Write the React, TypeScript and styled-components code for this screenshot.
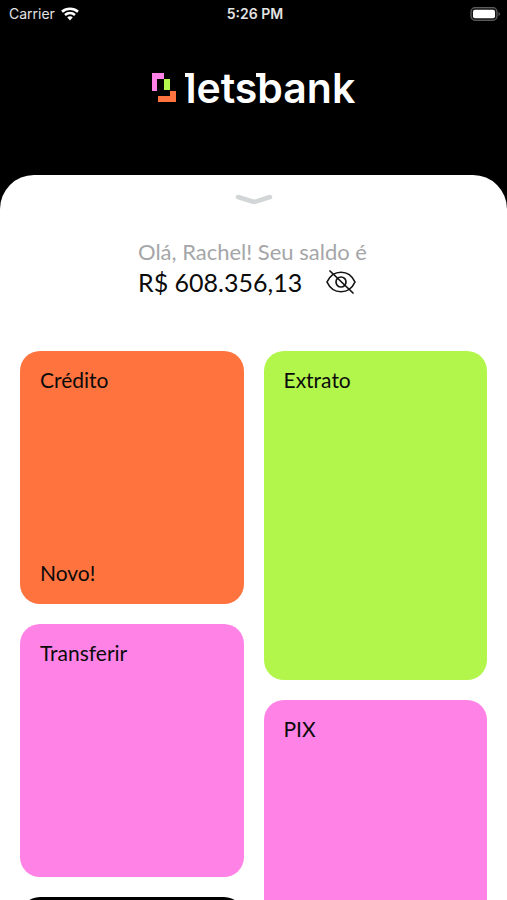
import React from "react";
import styled, { createGlobalStyle } from "styled-components";

const GlobalStyle = createGlobalStyle`
  * { box-sizing: border-box; }
  html, body { margin: 0; background: #000; }
  body { font-family: Lato, "Open Sans", sans-serif; color: #0b0b0b; }
  button { font: inherit; color: inherit; border: 0; padding: 0; background: none; cursor: pointer; }
`;

const Screen = styled.div`
  display: flex;
  flex-direction: column;
  height: 100vh;
  overflow: hidden;
  background: #000;
`;

const StatusBar = styled.header`
  flex: none;
  display: grid;
  grid-template-columns: 1fr auto 1fr;
  align-items: center;
  height: 28px;
  padding: 0 6px 0 9px;
  color: #e4e4e4;
  font: 400 14px/20px Inter, sans-serif;
`;

const Carrier = styled.span`
  display: flex;
  align-items: center;
  gap: 6px;
`;

const Clock = styled.time`
  font-size: 14px;
  font-weight: 600;
`;

const BatteryIcon = styled.svg`
  justify-self: end;
`;

const Brand = styled.div`
  flex: none;
  display: flex;
  align-items: center;
  justify-content: center;
  gap: 10px;
  height: 147px;
  padding-bottom: 28px;
`;

const Wordmark = styled.h1`
  margin: 0;
  color: #fff;
  font-family: Inter, sans-serif;
  font-size: 41px;
  line-height: 48px;
  font-weight: 600;
`;

const SlabLetter = styled.span`
  position: relative;

  &::before {
    content: "";
    position: absolute;
    top: 10px;
    left: -1px;
    width: 6px;
    height: 4px;
    background: #fff;
  }
`;

const Sheet = styled.main`
  flex: none;
  display: flex;
  flex-direction: column;
  align-items: center;
  padding: 18px 20px 20px;
  border-radius: 34px 34px 0 0;
  background: #fff;
`;

const Handle = styled.button`
  display: flex;
  height: 12px;
`;

const Balance = styled.section`
  width: 231px;
  margin-top: 33px;
  white-space: nowrap;
`;

const Greeting = styled.p`
  margin: 0;
  color: #a5a6a8;
  font-size: 22px;
  line-height: 28px;
`;

const AmountRow = styled.div`
  display: flex;
  align-items: center;
  gap: 24px;
  height: 32px;
`;

const Amount = styled.strong`
  font-size: 25px;
  line-height: 32px;
  font-weight: 400;
`;

const EyeButton = styled.button`
  display: flex;
`;

const Cards = styled.nav`
  display: grid;
  grid-template-columns: 1fr 1fr;
  align-items: start;
  gap: 20px;
  width: 100%;
  margin-top: 53px;
`;

const Column = styled.div`
  display: flex;
  flex-direction: column;
  gap: 20px;
`;

const Card = styled.button<{ $color: string; $tall?: boolean }>`
  && {
    display: flex;
    flex-direction: column;
    justify-content: space-between;
    align-items: flex-start;
    height: ${(p) => (p.$tall ? 329 : 253)}px;
    padding: 16px 20px 18px;
    border-radius: 20px;
    background: ${(p) => p.$color};
    font-size: 21px;
    line-height: 26px;
    text-align: left;
  }
`;

export default function App() {
  return (
    <>
      <GlobalStyle />
      <Screen>
        <StatusBar>
          <Carrier>
            Carrier
            <svg width="18" height="14" viewBox="0 0 18 14" fill="none" stroke="#fff" strokeWidth="2.6" aria-label="Wi-Fi">
              <path d="M1 4.8C5.5.8 12.500.8 17 4.800" />
              <path d="M4 8c2.900-2.500 7.100-2.500 10 0" />
              <path d="M6.200 10.300C7.800 9 10.200 9 11.800 10.300L9 13.500z" fill="#fff" stroke="none" />
            </svg>
          </Carrier>
          <Clock>5:26 PM</Clock>
          <BatteryIcon width="31" height="14" viewBox="0 0 31 14" aria-label="Bateria">
            <rect x="1" y="0.700" width="26" height="12.600" rx="4" fill="#151515" stroke="#5c5c5c" strokeWidth="1.300" />
            <rect x="3" y="2.700" width="22" height="8.600" rx="2" fill="#fff" />
            <path d="M28.500 5c2 .7 2 3.300 0 4z" fill="#5c5c5c" />
          </BatteryIcon>
        </StatusBar>

        <Brand>
          <svg width="24" height="30" viewBox="0 0 24 30" aria-hidden="true">
            <path d="M0 0h12v6H5v12H0z" fill="#ff83e6" />
            <path d="M12 6h6v11h-6z" fill="#b2f64b" />
            <path d="M18 18h6v11H6v-6h12z" fill="#ff733f" />
          </svg>
          <Wordmark>
            <SlabLetter>l</SlabLetter>ets<SlabLetter>b</SlabLetter>ank
          </Wordmark>
        </Brand>

        <Sheet>
          <Handle aria-label="Expandir">
            <svg width="38" height="12" viewBox="0 0 38 12" fill="none" stroke="#d3d6d7" strokeWidth="4.500" strokeLinecap="round" strokeLinejoin="round">
              <path d="M3 4l16 5 16-5" />
            </svg>
          </Handle>

          <Balance>
            <Greeting>Olá, Rachel! Seu saldo é</Greeting>
            <AmountRow>
              <Amount>R$ 608.356,13</Amount>
              <EyeButton aria-label="Ocultar saldo">
                <svg width="30" height="24" viewBox="0 0 30 24" fill="none" stroke="#151515" strokeWidth="1.700" strokeLinecap="round">
                  <path d="M1 12C7-1 23-1 29 12 23 25 7 25 1 12z" />
                  <circle cx="15" cy="12" r="5" />
                  <path d="M4 1l23 22" />
                </svg>
              </EyeButton>
            </AmountRow>
          </Balance>

          <Cards>
            <Column>
              <Card $color="#ff733f">
                <span>Crédito</span>
                <span>Novo!</span>
              </Card>
              <Card $color="#ff83e6">
                <span>Transferir</span>
              </Card>
              <Card $color="#000" />
            </Column>
            <Column>
              <Card $color="#b2f64b" $tall>
                <span>Extrato</span>
              </Card>
              <Card $color="#ff83e6">
                <span>PIX</span>
              </Card>
            </Column>
          </Cards>
        </Sheet>
      </Screen>
    </>
  );
}
